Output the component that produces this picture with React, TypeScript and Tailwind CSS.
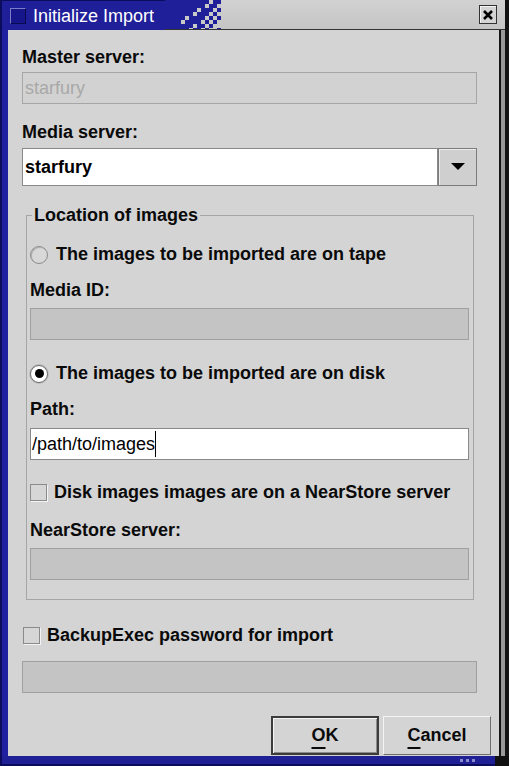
import React from "react";

function Label({ children }: { children: React.ReactNode }) {
  return <div className="h-[21px] text-[18px] font-bold leading-[21px] text-[#0a0a0a]">{children}</div>;
}

function DisabledField({ className = "" }: { className?: string }) {
  return <div className={"h-[32px] border border-[#a0a0a0] bg-[#c4c4c4] " + className} />;
}

function Radio({ checked }: { checked?: boolean }) {
  return (
    <span
      className={
        "flex h-[18px] w-[18px] shrink-0 items-center justify-center rounded-full border " +
        (checked
          ? "border-[#6c6c6c] bg-white shadow-[0_0_0_1px_#bcbcbc]"
          : "border-[#8c8c8c] bg-[#d8d8d8] shadow-[inset_1px_1px_0_#b4b4b4]")
      }
    >
      {checked && <span className="h-[9px] w-[9px] rounded-full bg-black" />}
    </span>
  );
}

function Check() {
  return (
    <span className="h-[17px] w-[17px] shrink-0 border border-[#8a8a8a] bg-[#d6d6d6] shadow-[1px_1px_0_#f4f4f4]" />
  );
}

function Dither() {
  const blue = "#1f1f9a";
  // 4px cells over 56x30 transition region; probability of blue decreases to the right
  const cells: [number, number][] = [];
  const pattern = [
    "11111111111011010100",
    "11111111110110101000",
    "11111111011101010010",
    "11111110111010100100",
    "11111011110101001000",
    "11110111101010010000",
    "11111110110100100000",
    "11111101101001000000",
  ];
  pattern.forEach((row, r) => {
    row.split("").forEach((c, i) => {
      if (c === "1" && i < 14) cells.push([i * 4, r * 4]);
    });
  });
  return (
    <svg width="56" height="30" viewBox="0 0 56 30" className="shrink-0">
      <rect width="56" height="30" fill="#c9c9c9" />
      {cells.map(([x, y], i) => (
        <rect key={i} x={x} y={y} width="4" height="4" fill={blue} />
      ))}
      <rect x="0" y="29" width="56" height="1" fill="#333" />
    </svg>
  );
}

export default function App() {
  return (
    <div className="flex h-[766px] w-[509px] flex-col overflow-hidden bg-[#1d1d8e] font-['Liberation_Sans',Arial,sans-serif]">
      {/* title bar */}
      <div className="flex h-[30px] shrink-0">
        <div className="flex w-[165px] items-center border-l-2 border-t border-[#0c0c5c] bg-[#1f1f9a] pl-[8px]">
          <div className="h-[16px] w-[16px] border border-b-[#0a0a50] border-l-[#7c7cc8] border-r-[#0a0a50] border-t-[#7c7cc8] bg-[#16168a]" />
          <span className="ml-[7px] text-[18px] leading-none text-white">Initialize Import</span>
        </div>
        <Dither />
        <div className="flex flex-1 items-center justify-end border-b border-[#333] bg-[linear-gradient(180deg,#d2d2d2,#c4c4c4)] pr-[8px]">
          <div className="flex h-[19px] w-[18px] items-center justify-center border border-[#333] bg-[#d4d4d4] shadow-[inset_1px_1px_0_#f4f4f4]">
            <svg width="10" height="10" viewBox="0 0 10 10">
              <path d="M1 1 L9 9 M9 1 L1 9" stroke="#000" strokeWidth="2.6" />
            </svg>
          </div>
        </div>
        <div className="w-[4px] bg-[#111]" />
      </div>

      {/* body */}
      <div className="flex flex-1">
        <div className="w-[8px] shrink-0 border-l-2 border-[#0d0d5c] bg-[#2020a0]" />
        <div className="flex flex-1 flex-col bg-[#d4d4d4] pl-[14px] pr-[22px] pt-[17px]">
          <Label>Master server:</Label>
          <div className="mt-[4px] flex h-[32px] items-center border border-[#a6a6a6] bg-[#d2d2d2] pl-[2px] text-[18px] text-[#a8a8a8]">
            starfury
          </div>

          <div className="mt-[18px]">
            <Label>Media server:</Label>
          </div>
          <div className="mt-[5px] flex h-[38px]">
            <div className="flex flex-1 items-center border border-[#8a8a8a] bg-white pl-[2px] text-[18px] font-bold text-black">
              starfury
            </div>
            <div className="flex w-[39px] items-center justify-center border border-[#7c7c7c] bg-[#cfcfcf] shadow-[inset_1px_1px_0_#ececec]">
              <svg width="14" height="8" viewBox="0 0 14 8">
                <polygon points="0,0 14,0 7,7" fill="#000" />
              </svg>
            </div>
          </div>

          <fieldset className="ml-[4px] mr-[3px] mt-[18px] border border-[#a6a6a6] pb-[19px] pl-[3px] pr-[4px]">
            <legend className="ml-[2px] h-[22px] px-[2px] text-[18px] font-bold leading-[22px] text-[#0a0a0a]">
              Location of images
            </legend>
            <div className="mt-[18px] flex h-[21px] items-center gap-[8px] text-[18px] font-bold text-[#0a0a0a]">
              <Radio />
              <span>The images to be imported are on tape</span>
            </div>
            <div className="mt-[15px]">
              <Label>Media ID:</Label>
            </div>
            <DisabledField className="mt-[7px]" />
            <div className="mt-[23px] flex h-[21px] items-center gap-[8px] text-[18px] font-bold text-[#0a0a0a]">
              <Radio checked />
              <span>The images to be imported are on disk</span>
            </div>
            <div className="mt-[15px]">
              <Label>Path:</Label>
            </div>
            <div className="mt-[8px] flex h-[32px] items-center border border-[#8a8a8a] bg-white pl-[1px] text-[18px] text-black">
              <span>/path/to/images</span>
              <span className="h-[26px] w-px bg-black" />
            </div>
            <div className="mt-[22px] flex h-[21px] items-center gap-[7px] text-[18px] font-bold text-[#0a0a0a]">
              <Check />
              <span>Disk images images are on a NearStore server</span>
            </div>
            <div className="mt-[17px]">
              <Label>NearStore server:</Label>
            </div>
            <DisabledField className="mt-[7px]" />
          </fieldset>

          <div className="ml-[1px] mt-[25px] flex h-[21px] items-center gap-[7px] text-[18px] font-bold text-[#0a0a0a]">
            <Check />
            <span>BackupExec password for import</span>
          </div>
          <DisabledField className="mt-[15px]" />

          <div className="-mr-[14px] mt-[23px] flex justify-end gap-[4px]">
            <button className="flex h-[39px] w-[108px] items-center justify-center border-2 border-[#3c3c3c] bg-[#d4d4d4] text-[18px] font-bold text-[#0a0a0a] shadow-[inset_1px_1px_0_#f4f4f4,inset_-1px_-1px_0_#8a8a8a]">
              <span className="underline decoration-2 underline-offset-[6px]">O</span>K
            </button>
            <button className="flex h-[39px] w-[108px] items-center justify-center border border-b-[#6e6e6e] border-l-[#f4f4f4] border-r-[#6e6e6e] border-t-[#f4f4f4] bg-[#d4d4d4] text-[18px] font-bold text-[#0a0a0a]">
              <span className="underline decoration-2 underline-offset-[6px]">C</span>ancel
            </button>
          </div>
        </div>
        <div className="w-[10px] shrink-0 border-l-2 border-r-4 border-[#151515] bg-[#9a9a9a]" />
      </div>

      {/* bottom border */}
      <div className="flex h-[10px] shrink-0">
        <div className="flex flex-1 items-center justify-end gap-[3px] border-b-2 border-l-2 border-[#0c0c5c] bg-[#1f1f96] pr-[20px]">
          <span className="h-[3px] w-[3px] bg-[#8a8ac8]" />
          <span className="h-[3px] w-[3px] bg-[#8a8ac8]" />
          <span className="h-[3px] w-[3px] bg-[#8a8ac8]" />
        </div>
        <div className="w-[14px] bg-[#111]" />
      </div>
    </div>
  );
}
